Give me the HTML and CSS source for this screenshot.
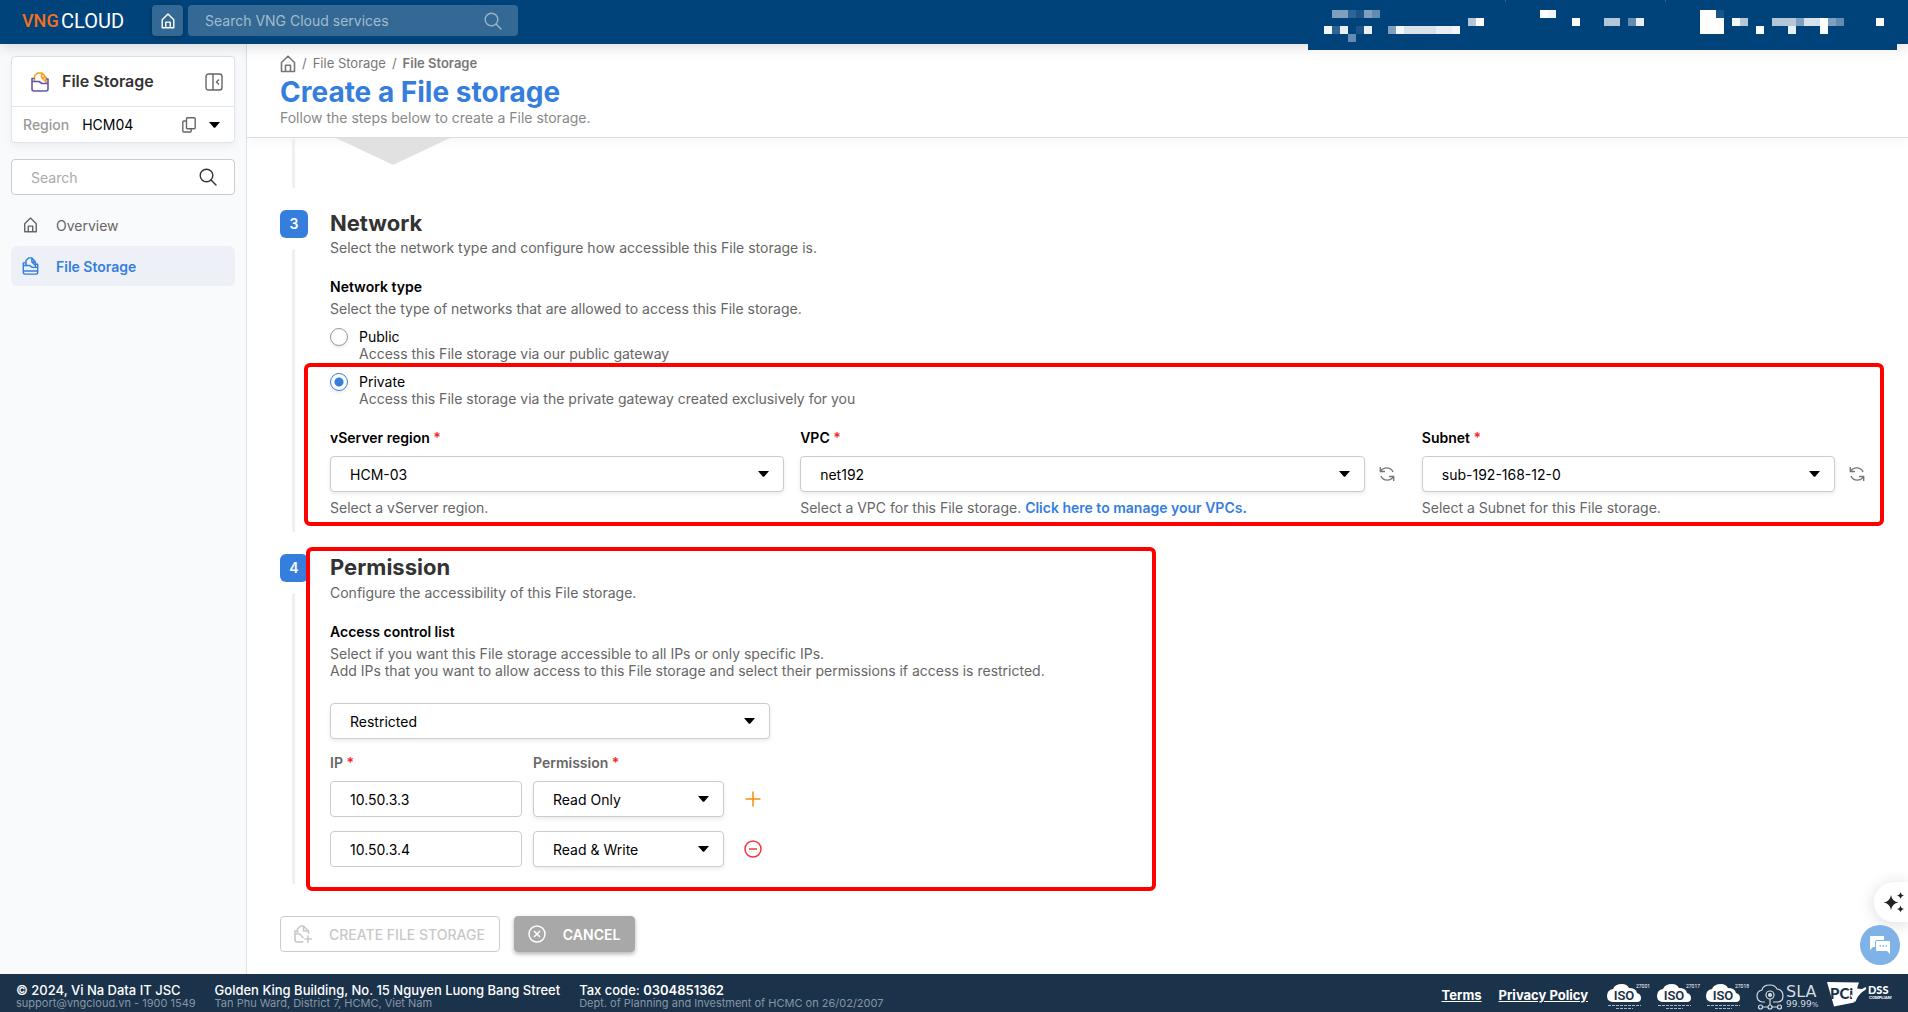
FILE: index.html
```html
<!DOCTYPE html>
<html lang="en">
<head>
<meta charset="utf-8">
<title>Create a File storage</title>
<link rel="stylesheet" href="styles.css">
</head>
<body>
<svg class="defs" aria-hidden="true">
  <symbol id="i-home" viewBox="0 0 16 18"><path d="M1.5 7.5 8 1.2l6.500 6.300V16.500h-13zM5.500 16.500v-6.200h5v6.200" fill="none" stroke="currentColor" stroke-width="1.600" stroke-linejoin="round"/></symbol>
  <symbol id="i-search" viewBox="0 0 18 18"><circle cx="7.500" cy="7.500" r="6.300" fill="none" stroke="currentColor" stroke-width="1.400"/><path d="m12 12 5 5" stroke="currentColor" stroke-width="1.400" stroke-linecap="round"/></symbol>
  <symbol id="i-caret" viewBox="0 0 11 6"><path d="M0 0h11L6.300 5.500q-.8.700-1.600 0z" fill="currentColor"/></symbol>
  <symbol id="i-refresh" viewBox="0 0 16 16"><path d="M1.300 1v4.500H6M1.800 5.200C4 1 11.500.2 14 6M14.700 15v-4.500H10M14.200 10.800C12 15 4.500 15.800 2 10" fill="none" stroke="currentColor" stroke-width="1.400"/></symbol>
</svg>

<header class="topbar">
  <a class="logo" href="#" aria-label="VNG Cloud"><span class="logo-vng">VNG</span><span class="logo-cloud">CLOUD</span></a>
  <button class="home-btn" aria-label="Home"><svg width="16" height="16"><use href="#i-home"/></svg></button>
  <div class="top-search">
    <input type="text" placeholder="Search VNG Cloud services" aria-label="Search VNG Cloud services">
    <svg width="18" height="18"><use href="#i-search"/></svg>
  </div>
  <svg class="account" width="589" height="50" viewBox="1308 0 589 50" shape-rendering="crispEdges" aria-hidden="true">
    <path fill="#00437a" d="M1308 0h589v50h-589z"/>
    <path fill="#2f6497" d="M1505 0h1v2h-1zM1665 0h1v2h-1zM1348 10h8v8h-8zM1332 26h8v8h-8z"/>
    <path fill="#1b5489" d="M1356 10h8v8h-8zM1356 26h8v8h-8zM1716 10h8v8h-8z"/>
    <path fill="#7f9fbe" d="M1332 10h16v8h-16zM1364 10h8v8h-8zM1388 26h8v8h-8zM1796 18h8v8h-8zM1828 18h8v8h-8z"/>
    <path fill="#648cb0" d="M1372 10h8v8h-8zM1348 34h8v8h-8zM1628 18h8v8h-8zM1836 18h8v8h-8z"/>
    <path fill="#b4c7d8" d="M1468 18h8v8h-8zM1604 18h16v8h-16zM1740 18h8v8h-8zM1772 18h24v8h-24z"/>
    <path fill="#d6e1ea" d="M1404 26h32v8h-32zM1804 18h16v8h-16z"/>
    <path fill="#e8eef4" d="M1340 26h8v8h-8zM1364 26h8v8h-8zM1436 26h16v8h-16zM1636 18h8v8h-8zM1788 26h8v8h-8z"/>
    <path fill="#f4f7fa" d="M1324 26h8v8h-8zM1396 26h8v8h-8zM1452 26h8v8h-8zM1548 10h8v8h-8zM1732 18h8v8h-8z"/>
    <path fill="#fff" d="M1476 18h8v8h-8zM1540 10h8v8h-8zM1572 18h8v8h-8zM1700 10h16v8h8v16h-24zM1756 26h8v8h-8zM1820 18h8v16h-8zM1876 18h8v8h-8z"/>
  </svg>
</header>

<div class="shell">
  <aside class="sidebar">
    <div class="service-card">
      <div class="service-row">
        <svg width="18" height="20" viewBox="0 0 18 20" fill="none" stroke-width="1.600" stroke-linejoin="round"><path stroke="#f9a11b" d="M3.500 9.500V4L6.500 1H11l4 4.500V12M10.500 1v4.500H15M10.500 5.500l4 4"/><path stroke="#5f57ab" d="M3.500 6.500H1V17q0 2 2 2h12q2 0 2-2v-5.500h-6L8 9.500H1M15 7h2v5"/></svg>
        <h2>File Storage</h2>
        <button class="icon-btn" aria-label="Collapse menu"><svg width="18" height="18" viewBox="0 0 18 18" fill="none" stroke="currentColor" stroke-width="1.400"><rect x="1" y="1" width="16" height="16" rx="2.500"/><path d="M8 1v16M14 6.500 11.500 9l2.500 2.500"/></svg></button>
      </div>
      <div class="region-row">
        <span class="muted">Region</span><span class="region">HCM04</span>
        <button class="icon-btn" aria-label="Copy region"><svg width="14" height="16" viewBox="0 0 14 16" fill="none" stroke="currentColor" stroke-width="1.400"><path d="M4.500 4H1.700q-.9 0-.9.900v9.200q0 .9.900.9h6.600q.9 0 .9-.9V12"/><rect x="4.500" y=".8" width="8.700" height="11" rx="1"/></svg></button>
        <button class="icon-btn dark" aria-label="Change region"><svg width="11" height="6"><use href="#i-caret"/></svg></button>
      </div>
    </div>
    <div class="side-search">
      <input type="text" placeholder="Search" aria-label="Search menu">
      <svg width="18" height="18"><use href="#i-search"/></svg>
    </div>
    <nav class="menu">
      <a href="#"><svg width="17" height="16"><use href="#i-home"/></svg>Overview</a>
      <a href="#" class="active"><svg width="17" height="18" viewBox="0 0 18 20" fill="none" stroke="currentColor" stroke-width="1.600" stroke-linejoin="round"><path d="M4 9V4L7 1h3.500l4 4.500V12M10.500 1v4.500h4M10.500 5.500l4 4"/><path d="M4 6.500H1V17q0 2 2 2h12q2 0 2-2v-5.500h-6L8 9.500H1M14.500 8H17v5M1 15.500h16"/></svg>File Storage</a>
    </nav>
  </aside>

  <main class="main">
    <div class="page-head">
      <nav class="crumbs" aria-label="Breadcrumb"><a href="#" aria-label="Home"><svg width="16" height="18"><use href="#i-home"/></svg></a><span>/</span><a href="#">File Storage</a><span>/</span><b>File Storage</b></nav>
      <h1>Create a File storage</h1>
      <p>Follow the steps below to create a File storage.</p>
    </div>

    <form class="steps">
      <section class="step step-prev">
        <div class="rail"><i class="line"></i></div>
        <div class="body"><svg class="hex" width="126" height="28" viewBox="0 0 126 28"><path d="M6 0h114L65 26q-2 1.200-4 0z" fill="#e1e1e1"/></svg></div>
      </section>

      <section class="step">
        <div class="rail"><span class="num">3</span><i class="line"></i></div>
        <div class="body">
          <h3>Network</h3>
          <p class="desc">Select the network type and configure how accessible this File storage is.</p>
          <h4>Network type</h4>
          <p class="hint">Select the type of networks that are allowed to access this File storage.</p>
          <label class="radio"><input type="radio" name="net"><span>Public<small>Access this File storage via our public gateway</small></span></label>
          <div class="marked">
            <label class="radio"><input type="radio" name="net" checked><span>Private<small>Access this File storage via the private gateway created exclusively for you</small></span></label>
            <div class="fields">
              <div class="field">
                <label for="region">vServer region <em>*</em></label>
                <div class="control"><div class="select"><select id="region"><option>HCM-03</option></select><svg width="11" height="6"><use href="#i-caret"/></svg></div></div>
                <p>Select a vServer region.</p>
              </div>
              <div class="field">
                <label for="vpc">VPC <em>*</em></label>
                <div class="control"><div class="select"><select id="vpc"><option>net192</option></select><svg width="11" height="6"><use href="#i-caret"/></svg></div><button type="button" class="icon-btn refresh" aria-label="Refresh VPCs"><svg width="16" height="16"><use href="#i-refresh"/></svg></button></div>
                <p>Select a VPC for this File storage. <a href="#">Click here to manage your VPCs.</a></p>
              </div>
              <div class="field">
                <label for="subnet">Subnet <em>*</em></label>
                <div class="control"><div class="select"><select id="subnet"><option>sub-192-168-12-0</option></select><svg width="11" height="6"><use href="#i-caret"/></svg></div><button type="button" class="icon-btn refresh" aria-label="Refresh subnets"><svg width="16" height="16"><use href="#i-refresh"/></svg></button></div>
                <p>Select a Subnet for this File storage.</p>
              </div>
            </div>
            <i class="frame frame-network"></i>
          </div>
        </div>
      </section>

      <section class="step">
        <div class="rail"><span class="num">4</span><i class="line"></i></div>
        <div class="body permission">
          <h3>Permission</h3>
          <p class="desc">Configure the accessibility of this File storage.</p>
          <h4>Access control list</h4>
          <p class="hint">Select if you want this File storage accessible to all IPs or only specific IPs.<br>Add IPs that you want to allow access to this File storage and select their permissions if access is restricted.</p>
          <div class="select mode"><select aria-label="Access mode"><option>Restricted</option></select><svg width="11" height="6"><use href="#i-caret"/></svg></div>
          <div class="acl">
            <label for="ip1">IP <em>*</em></label><label for="perm1">Permission <em>*</em></label><span></span>
            <input id="ip1" type="text" value="10.50.3.3">
            <div class="select"><select id="perm1"><option>Read Only</option></select><svg width="11" height="6"><use href="#i-caret"/></svg></div>
            <button type="button" class="icon-btn add" aria-label="Add IP"><svg width="16" height="16" viewBox="0 0 16 16"><path d="M8 .5v15M.5 8h15" stroke="currentColor" stroke-width="1.500"/></svg></button>
            <input type="text" value="10.50.3.4" aria-label="IP">
            <div class="select"><select aria-label="Permission"><option>Read &amp; Write</option></select><svg width="11" height="6"><use href="#i-caret"/></svg></div>
            <button type="button" class="icon-btn remove" aria-label="Remove IP"><svg width="18" height="18" viewBox="0 0 18 18" fill="none" stroke="currentColor" stroke-width="1.500"><circle cx="9" cy="9" r="8"/><path d="M5 9h8"/></svg></button>
          </div>
          <i class="frame frame-permission"></i>
        </div>
      </section>

      <div class="actions">
        <button type="button" class="btn create" disabled><svg width="18" height="18" viewBox="0 0 18 18" fill="none" stroke="currentColor" stroke-width="1.600" stroke-linejoin="round"><path d="M3.500 8V4l3-3h3l5 5v3M9.500 1v5h5M3.500 6H1v9q0 2 2 2h6.500M1 9h4.500l4 4M14 10.500V18M10.500 14H18"/></svg>CREATE FILE STORAGE</button>
        <button type="button" class="btn cancel"><svg width="18" height="18" viewBox="0 0 18 18" fill="none" stroke="currentColor" stroke-width="1.500"><circle cx="9" cy="9" r="8"/><path d="m6 6 6 6M12 6l-6 6"/></svg>CANCEL</button>
      </div>
    </form>
  </main>
</div>

<footer class="footer">
  <div><strong>© 2024, Vi Na Data IT JSC</strong><small>support@vngcloud.vn - 1900 1549</small></div>
  <div><strong>Golden King Building, No. 15 Nguyen Luong Bang Street</strong><small>Tan Phu Ward, District 7, HCMC, Viet Nam</small></div>
  <div><strong>Tax code: <b>0304851362</b></strong><small>Dept. of Planning and Investment of HCMC on 26/02/2007</small></div>
  <div class="links">
    <a href="#">Terms</a><a href="#">Privacy Policy</a>
    <svg width="287" height="32" viewBox="0 0 287 32" role="img" aria-label="Certifications">
      <defs><g id="iso"><path d="M9 22q-7 0-7-6t6-7q2-5 9-5 5 0 7 4 7 0 8 5 4 1 4 5t-4 4z" fill="#fff"/><path d="M3 25.500h33M11 28.500h17" stroke="#a9b5c0" stroke-width="1" stroke-dasharray="3 1"/></g></defs>
      <use href="#iso"/><text x="19" y="20" text-anchor="middle" class="t-iso">ISO</text><text x="31" y="8" class="t-num">27001</text>
      <use href="#iso" x="50"/><text x="69" y="20" text-anchor="middle" class="t-iso">ISO</text><text x="81" y="8" class="t-num">27017</text>
      <use href="#iso" x="99"/><text x="118" y="20" text-anchor="middle" class="t-iso">ISO</text><text x="130" y="8" class="t-num">27018</text>
      <g fill="none" stroke="#d5dce2" stroke-width="1.200" transform="translate(2 3)"><path d="M158 19h-3q-5-1-5-6t5-6q1-5 8-5 5 0 7 4 6 1 6 7t-6 6h-4"/><circle cx="163" cy="12" r="4"/><circle cx="163" cy="12" r="1.500" fill="#d5dce2"/><path d="M163 16v6M155 24h6M165 24h6"/><circle cx="153.500" cy="24" r="2"/><circle cx="163" cy="24" r="2"/><circle cx="172.500" cy="24" r="2"/></g>
      <text x="181" y="17" class="t-sla">SLA</text><text x="181" y="27" class="t-pct">99.99<tspan class="t-small">%</tspan></text>
      <path d="M222 2l32 .5-2 6 9 1q-8 4-12 13l-20 4z" fill="#fff"/><text x="225" y="19" class="t-pci">PCi</text><path d="m246 15 4 5q4-9 11-12" fill="none" stroke="#fff" stroke-width="2"/>
      <text x="263" y="14" class="t-dss">DSS</text><text x="264" y="19" class="t-comp">COMPLIANT</text>
    </svg>
  </div>
</footer>

<button class="float-ai" aria-label="Assistant"><svg width="22" height="22" viewBox="0 0 22 22" fill="#222"><path d="M8 4q1 6.500 7.500 7.500Q9 12.500 8 19 7 12.500.5 11.500 7 10.500 8 4zM17.500 1q.5 3 3.500 3.500-3 .5-3.500 3.500-.5-3-3.500-3.500 3-.5 3.500-3.500zM17.500 14.500q.5 3 3.500 3.500-3 .5-3.500 3.500-.5-3-3.500-3.500 3-.5 3.500-3.500z"/></svg></button>
<button class="float-chat" aria-label="Chat"><svg width="20" height="18" viewBox="0 0 20 18"><path d="M1 0h13v4H7q-2 0-2 2v5H3l-3 3V1q0-1 1-1z" fill="#fff"/><path d="M7 5h12q1 0 1 1v12l-3-3H7q-1 0-1-1V6q0-1 1-1z" fill="#fff"/><path d="M9.500 10h1.500M12.500 10H14M15.500 10H17" stroke="#7fb2e6" stroke-width="1.500"/></svg></button>
</body>
</html>
```
FILE: styles.css
```css
* { box-sizing: border-box; }
body { margin: 0; min-height: 100vh; display: flex; flex-direction: column; font: 14px/17px Inter, "Liberation Sans", sans-serif; font-optical-sizing: none; color: #000; background: #fff; }
h1, h2, h3, h4, p { margin: 0; }
button, input, select { font: inherit; color: inherit; }
a { color: inherit; text-decoration: none; }
em { color: #f5222d; font-style: normal; }
svg { display: block; flex: none; }
.defs { position: absolute; width: 0; height: 0; }
.icon-btn { display: flex; align-items: center; justify-content: center; padding: 0; border: 0; background: none; color: #666; }
.icon-btn.dark { color: #000; }

.topbar { position: relative; z-index: 3; height: 44px; flex: none; display: flex; align-items: center; padding: 0 11px 3px 22px; background: #00437a; box-shadow: 0 4px 12px rgba(0, 0, 0, .12); }
.logo { display: flex; align-items: center; width: 130px; font: 20px/24px Roboto, sans-serif; }
.logo-vng { width: 39px; color: #f37021; font-size: 18px; font-weight: 500; }
.logo-cloud { color: #fff; }
.home-btn { width: 31px; height: 31px; display: flex; align-items: center; justify-content: center; padding: 0; border: 0; border-radius: 4px; background: #336994; color: #fff; box-shadow: 0 1px 4px rgba(0, 0, 0, .3); }
.top-search { display: flex; align-items: center; width: 330px; height: 31px; margin-left: 5px; padding: 0 16px 0 17px; border-radius: 4px; background: #336994; color: #9ab4ca; }
.top-search input, .side-search input { flex: 1; min-width: 0; padding: 0; border: 0; outline: 0; background: none; }
.top-search input::placeholder { color: #a3bbcf; }
.account { position: absolute; top: 0; right: 11px; }

.shell { flex: 1; display: flex; }
.sidebar { width: 247px; flex: none; padding: 12px 11px; border-right: 1px solid #dde3ea; background: #f9fafc; }
.service-card { border: 1px solid #dfe3ec; border-radius: 4px; background: #fff; box-shadow: 0 4px 10px rgba(0, 0, 0, .05); }
.service-row { display: flex; align-items: center; gap: 13px; height: 50px; padding: 0 11px 0 19px; border-bottom: 1px solid #dfe3ec; }
.service-row h2 { flex: 1; font-size: 16px; font-weight: 600; color: #333; }
.region-row { display: flex; align-items: center; gap: 13px; height: 35px; padding: 0 14px 0 11px; }
.muted { color: #999; font-weight: 500; }
.region { flex: 1; }
.side-search { display: flex; align-items: center; height: 36px; margin-top: 16px; padding: 0 17px 0 19px; border: 1px solid #ccc; border-radius: 4px; background: #fff; color: #333; }
.side-search input::placeholder { color: #aaa; }
.menu { display: flex; flex-direction: column; gap: 1px; margin-top: 10px; }
.menu a { display: grid; grid-template-columns: 17px 1fr; align-items: center; justify-items: start; gap: 17px; height: 40px; padding-left: 11px; border-radius: 6px; color: #666; }
.menu .active { background: #edf1f7; color: #357edd; font-weight: 600; }

.main { flex: 1; min-width: 0; display: flex; flex-direction: column; }
.page-head { height: 94px; padding: 10px 33px 0; border-bottom: 1px solid #ddd; box-shadow: 0 4px 10px rgba(0, 0, 0, .04); color: #888; }
.crumbs { display: flex; align-items: center; gap: 6px; height: 19px; font-size: 13px; color: #777; }
.crumbs b { font-weight: 600; }
.page-head h1 { margin-top: 2px; font-size: 28px; line-height: 34px; font-weight: 700; color: #357edd; }
.page-head p { color: #888; }

.steps { padding: 0 32px 22px 33px; }
.step { display: grid; grid-template-columns: 28px minmax(0, 1fr); gap: 22px; }
.rail { display: flex; flex-direction: column; align-items: center; gap: 11px; }
.num { width: 28px; height: 28px; border-radius: 6px; background: #357edd; color: #fff; font-weight: 600; line-height: 28px; text-align: center; }
.line { flex: 1; width: 3px; margin-right: 2px; border-radius: 2px; background: #f0f0f0; }
.step-prev { height: 50px; margin-bottom: 22px; }
.step .body { position: relative; padding-bottom: 16px; }
.step + .step + .step { margin-top: 22px; }
h3 { font-size: 22px; line-height: 27px; font-weight: 700; color: #333; }
.desc { margin-top: 2px; color: #666; }
.permission .desc { margin-top: 3px; }
h4 { margin-top: 22px; font-size: 14px; font-weight: 600; }
.hint { margin-top: 5px; color: #666; }
.radio { display: flex; gap: 11px; margin-top: 11px; }
.radio small { display: block; font-size: 14px; color: #666; }
.radio input { appearance: none; width: 18px; height: 18px; margin: 0; flex: none; border: 1px solid #999; border-radius: 50%; background: #fff; box-shadow: 0 2px 3px rgba(0, 0, 0, .08); }
.radio input:checked { border-color: #357edd; background: radial-gradient(#357edd 4px, #fff 5px); }
.marked { position: relative; }
.fields { display: grid; grid-template-columns: 3fr 4fr 3fr; gap: 16px; margin-top: 22px; }
.field { min-width: 0; }
.field label, .acl label { display: block; font-weight: 600; }
.field p { margin-top: 7px; color: #666; }
.field p a { color: #357edd; font-weight: 600; }
.control { display: flex; align-items: center; margin-top: 10px; }
.control .select { flex: 1; }
.refresh { width: 41px; padding-left: 4px; color: #777; }
.select { position: relative; display: flex; }
.select select, .acl input { appearance: none; width: 100%; height: 36px; padding: 0 19px; border: 1px solid #ccc; border-radius: 4px; background: #fff; }
.select select { box-shadow: 0 2px 4px rgba(0, 0, 0, .08); }
.select svg { position: absolute; right: 15px; top: 15px; pointer-events: none; }
.mode { width: 440px; margin-top: 24px; }
.acl { display: grid; grid-template-columns: 192px 191px 36px; column-gap: 11px; row-gap: 14px; margin-top: 15px; }
.acl label { margin-bottom: -4px; color: #666; }
.acl .add { color: #fa8c16; }
.acl .remove { color: #f5343a; }
.frame { position: absolute; border: 4px solid #f00; border-radius: 6px; pointer-events: none; }
.frame-network { inset: -10px -8px -10px -26px; }
.frame-permission { left: -24px; top: -7px; width: 850px; bottom: -7px; }
.permission { min-height: 330px; }

.actions { display: flex; gap: 14px; margin-top: 32px; }
.btn { display: flex; align-items: center; gap: 17px; height: 36px; padding: 0 14px 0 13px; border: 1px solid #ccc; border-radius: 4px; background: #fff; color: #c8c8c8; font-weight: 500; }
.cancel { border-color: #a8a8a8; background: #a8a8a8; color: #fff; font-weight: 600; box-shadow: 0 2px 4px rgba(0, 0, 0, .3); }

.footer { display: flex; align-items: center; gap: 19px; height: 38px; padding: 5px 16px 0; background: #1a324a; color: #fff; }
.footer strong, .footer small { display: block; font-weight: 500; }
.footer strong { font-size: 13px; line-height: 15px; }
.footer strong b { font-weight: 600; }
.footer small { font-size: 11px; line-height: 11px; font-weight: 400; color: #8896a3; }
.links { display: flex; align-items: center; gap: 17px; margin-left: auto; }
.links a { font-size: 13px; font-weight: 700; text-decoration: underline; }
.t-iso { font: 600 13px Roboto, sans-serif; fill: #1a324a; }
.t-num { font: 5px Roboto, sans-serif; fill: #fff; }
.t-sla { font: 16px "DejaVu Sans", sans-serif; fill: #d5dce2; }
.t-pct { font: 9px "DejaVu Sans", sans-serif; fill: #d5dce2; }
.t-small { font-size: 7px; }
.t-pci { font: 900 15px Lato, sans-serif; fill: #1a324a; }
.t-dss { font: 900 11px Lato, sans-serif; fill: #fff; }
.t-comp { font: 700 4px Inter, sans-serif; fill: #fff; }

.float-ai { position: fixed; right: 0; bottom: 90px; width: 34px; height: 40px; display: flex; align-items: center; padding: 0 0 0 9px; border: 0; border-radius: 20px 0 0 20px; background: #fff; box-shadow: 0 2px 16px rgba(0, 0, 0, .15); }
.float-chat { position: fixed; right: 8px; bottom: 47px; width: 40px; height: 40px; display: flex; align-items: center; justify-content: center; padding: 0; border: 0; border-radius: 50%; background: #7fb2e6; }
```
